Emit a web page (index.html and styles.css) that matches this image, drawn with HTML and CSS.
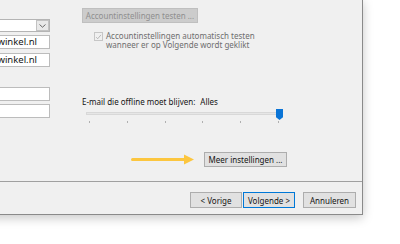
FILE: index.html
```html
<!DOCTYPE html>
<html lang="nl">
<head>
<meta charset="utf-8">
<title>Accountinstellingen</title>
<link rel="stylesheet" href="styles.css">
</head>
<body>
<div class="dialog">
  <div class="main">
    <div class="left">
      <div class="combo"><span class="combo-btn"><svg width="7" height="4" viewBox="0 0 7 4"><path d="M0.5 0.5 L3.5 3.2 L6.5 0.5" fill="none" stroke="#5a5a5a" stroke-width="0.9"/></svg></span></div>
      <div class="field f1"><span class="val">info@webwinkel.nl</span></div>
      <div class="field f2"><span class="val">info@webwinkel.nl</span></div>
      <div class="field f3"></div>
      <div class="field f4"></div>
    </div>
    <div class="right">
      <div class="btn disabled test-btn">Accountinstellingen testen ...</div>
      <div class="check-row">
        <span class="checkbox"><svg width="8" height="8" viewBox="0 0 8 8"><path d="M1.3 4.2 L3.1 6 L6.8 1.6" fill="none" stroke="#a8a8a8" stroke-width="0.9"/></svg></span>
        <span class="check-text"><span class="line">Accountinstellingen automatisch testen</span><span class="line">wanneer er op Volgende wordt geklikt</span></span>
      </div>
      <div class="offline-row"><span>E-mail die offline moet blijven:</span><span class="alles">Alles</span></div>
      <div class="slider">
        <div class="track"></div>
        <div class="thumb"></div>
        <div class="ticks"><i></i><i></i><i></i><i></i><i></i><i></i></div>
      </div>
      <div class="more-row">
        <svg class="arrow" width="63" height="11" viewBox="0 0 63 11"><line x1="1.5" y1="5.5" x2="54" y2="5.5" stroke="#fcc63f" stroke-width="3" stroke-linecap="round"/><polygon points="53,0.5 63,5.5 53,10.5" fill="#fcc63f"/></svg>
        <div class="btn more-btn">Meer instellingen ...</div>
      </div>
    </div>
  </div>
  <div class="footer">
    <div class="btn nav-btn">&lt; Vorige</div>
    <div class="btn nav-btn default">Volgende &gt;</div>
    <div class="btn nav-btn cancel">Annuleren</div>
  </div>
</div>
</body>
</html>
```
FILE: styles.css
```css
html, body {
  margin: 0;
  padding: 0;
  background: #ffffff;
  overflow: hidden;
}
body {
  width: 400px;
  height: 244px;
  font-family: "Noto Sans", "Open Sans", sans-serif;
  font-size: 8px;
  color: #141414;
}
.dialog {
  box-sizing: border-box;
  width: 563px;
  height: 216px;
  margin: -1px 0 0 -200px;
  border: 1px solid #8a8a8a;
  background: #f0f0f0;
  box-shadow: 0 3px 10px rgba(0, 0, 0, 0.22);
  display: flex;
  flex-direction: column;
}
.main {
  height: 181px;
  display: flex;
}
.left {
  width: 240px;
  margin-left: 9px;
  padding-top: 19px;
  display: flex;
  flex-direction: column;
}
.combo {
  box-sizing: border-box;
  height: 13px;
  border: 1px solid #b4b4b4;
  background: #ffffff;
  display: flex;
  justify-content: flex-end;
}
.combo-btn {
  box-sizing: border-box;
  width: 13px;
  height: 11px;
  border: 1px solid #c2c2c2;
  background: #e9e9e9;
  display: flex;
  align-items: center;
  justify-content: center;
}
.field {
  box-sizing: border-box;
  height: 14px;
  border: 1px solid #bcbcbc;
  background: #ffffff;
  display: flex;
  align-items: center;
  justify-content: flex-end;
  padding-right: 12px;
  overflow: hidden;
  white-space: nowrap;
}
.f1 { margin-top: 3px; }
.f2 { margin-top: 4px; }
.f3 { margin-top: 20px; }
.f4 { margin-top: 3px; }
.val {
  color: #141414;
  font-size: 9.5px;
  line-height: 12px;
}
.right {
  margin-left: 32px;
  padding-top: 8px;
  display: flex;
  flex-direction: column;
  align-items: flex-start;
}
.btn {
  box-sizing: border-box;
  height: 15px;
  border: 1px solid #adadad;
  background: #e1e1e1;
  display: flex;
  align-items: center;
  justify-content: center;
  white-space: nowrap;
  color: #141414;
}
.btn.disabled {
  background: #cccccc;
  border-color: #bfbfbf;
  color: #8f8f8f;
}
.test-btn {
  width: 116px;
}
.check-row {
  margin-top: 8px;
  margin-left: 12px;
  display: flex;
  align-items: flex-start;
}
.checkbox {
  box-sizing: border-box;
  width: 9px;
  height: 9px;
  margin-top: 1px;
  border: 1px solid #c6c6c6;
  background: #f0f0f0;
  display: flex;
  align-items: center;
  justify-content: center;
}
.check-text {
  margin-left: 3px;
  display: flex;
  flex-direction: column;
  color: #6e6e6e;
}
.check-text .line {
  display: block;
  height: 9px;
  line-height: 9px;
  white-space: nowrap;
}
.offline-row {
  margin-top: 48px;
  line-height: 10px;
  display: flex;
}
.alles {
  margin-left: 5px;
}
.slider {
  position: relative;
  width: 202px;
  height: 18px;
}
.track {
  position: absolute;
  left: 4px;
  top: 5px;
  width: 192px;
  height: 3px;
  box-sizing: border-box;
  border: 1px solid #d8d8d8;
  background: #e6e6e6;
}
.thumb {
  position: absolute;
  left: 194px;
  top: 2px;
  width: 7px;
  height: 11px;
  background: #0a74d6;
  clip-path: polygon(0 0, 100% 0, 100% 75%, 50% 100%, 0 75%);
}
.ticks {
  position: absolute;
  left: 7px;
  top: 14px;
  width: 190px;
  display: flex;
  justify-content: space-between;
}
.ticks i {
  display: block;
  width: 1px;
  height: 2px;
  background: #b0b0b0;
}
.more-row {
  margin-top: 27px;
  padding-left: 49px;
  display: flex;
  align-items: center;
  gap: 10px;
}
.more-btn {
  width: 83px;
}
.footer {
  border-top: 1px solid #a0a0a0;
  flex: 1;
  display: flex;
  justify-content: flex-end;
  align-items: flex-start;
  padding-top: 10px;
  padding-right: 6px;
}
.nav-btn {
  width: 52px;
  height: 16px;
}
.nav-btn.default {
  margin-left: 1px;
  border-color: #0078d7;
}
.nav-btn.cancel {
  margin-left: 8px;
  width: 53px;
}
```
